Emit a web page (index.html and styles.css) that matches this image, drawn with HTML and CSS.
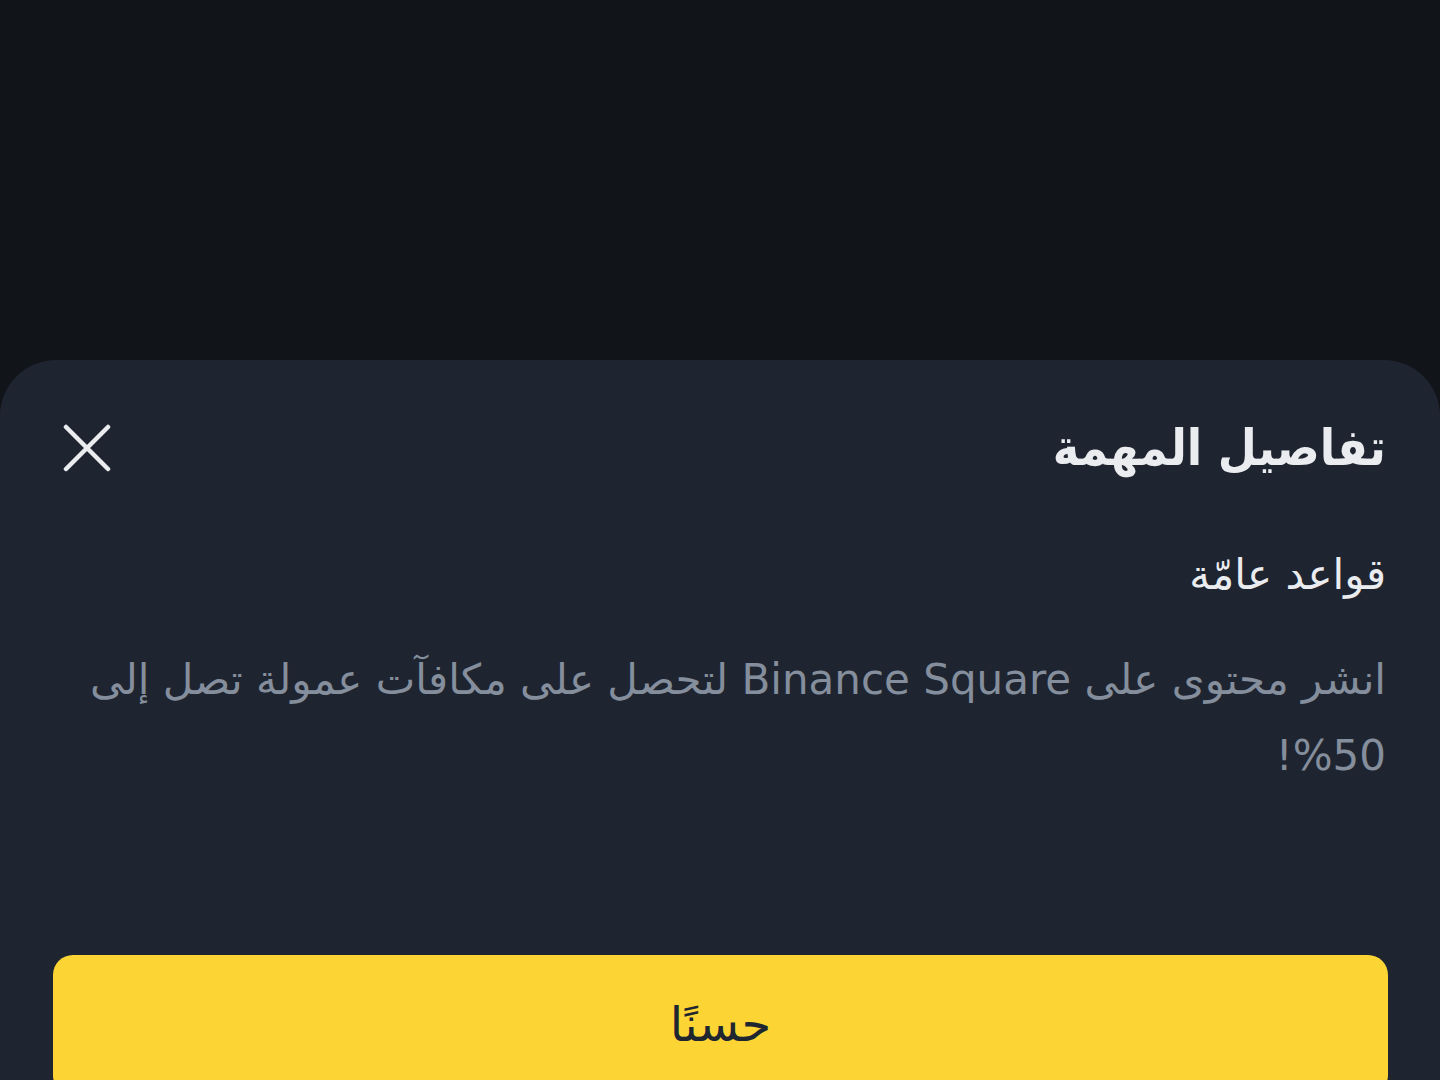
FILE: index.html
```html
<!DOCTYPE html>
<html lang="ar" dir="rtl">
<head>
<meta charset="utf-8">
<title>تفاصيل المهمة</title>
<link rel="stylesheet" href="styles.css">
</head>
<body>
<div class="backdrop"></div>
<div class="sheet">
  <div class="header">
    <h1 class="title">تفاصيل المهمة</h1>
    <button class="close" aria-label="إغلاق">
      <svg width="48" height="48" viewBox="0 0 48 48"><path d="M3 3 L45 45 M45 3 L3 45" stroke="#eaecef" stroke-width="4.5" stroke-linecap="round" fill="none"/></svg>
    </button>
  </div>
  <h2 class="section">قواعد عامّة</h2>
  <p class="desc">انشر محتوى على Binance Square لتحصل على مكافآت عمولة تصل إلى 50%!</p>
  <button class="ok">حسنًا</button>
</div>
</body>
</html>
```
FILE: styles.css
```css
html, body {
  margin: 0;
  padding: 0;
  height: 100%;
  overflow: hidden;
  background: #111418;
  font-family: "DejaVu Sans", sans-serif;
}
.backdrop {
  height: 360px;
}
.sheet {
  background: #1f2530;
  border-radius: 56px 56px 0 0;
  min-height: 720px;
  padding: 40px 52px 0 53px;
  box-sizing: border-box;
}
.header {
  height: 96px;
  display: flex;
  align-items: center;
  justify-content: space-between;
  padding-right: 2px;
}
.title {
  margin: 0;
  font-family: "DejaVu Sans Condensed", "DejaVu Sans", sans-serif;
  font-size: 50px;
  font-weight: 700;
  color: #eaecef;
  line-height: 1;
}
.close {
  background: none;
  border: 0;
  padding: 0;
  margin-left: 10px;
  width: 48px;
  height: 48px;
  display: flex;
}
.section {
  margin: 49px 2px 0 0;
  font-size: 42px;
  font-weight: 400;
  color: #eaecef;
  line-height: 60px;
}
.desc {
  margin: 37px 2px 0 0;
  font-size: 42px;
  line-height: 76px;
  color: #848e9c;
}
.ok {
  display: block;
  width: 100%;
  margin-top: 161px;
  height: 140px;
  border: 0;
  border-radius: 20px;
  background: #fcd535;
  color: #202630;
  font-family: inherit;
  font-size: 48px;
  padding: 0 0 2px;
}
```
